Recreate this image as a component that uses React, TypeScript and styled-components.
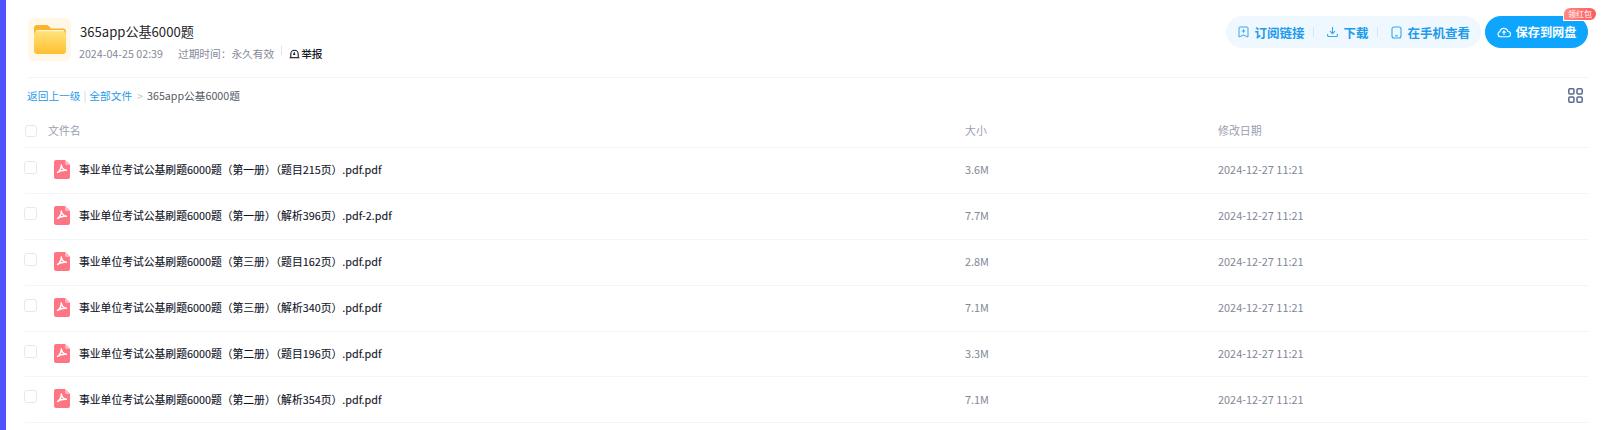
import React from 'react';
import styled, { createGlobalStyle } from 'styled-components';

const GlobalStyle = createGlobalStyle`
  html, body {
    margin: 0;
    padding: 0;
    background: #fff;
    font-family: "Noto Sans CJK SC", "Noto Sans", sans-serif;
  }
`;

const Page = styled.div`
  display: flex;
  height: 430px;
  overflow: hidden;
`;

const SideBar = styled.div`
  width: 6px;
  flex: none;
  background: #4f52ff;
`;

const Main = styled.div`
  flex: 1;
  min-width: 0;
  padding: 0 12px 0 19px;
`;

const Header = styled.div`
  display: flex;
  align-items: flex-start;
  justify-content: space-between;
  height: 77px;
  margin-left: 3px;
  border-bottom: 1px solid #f2f3f5;
`;

const Info = styled.div`
  display: flex;
  align-items: flex-start;
  gap: 8px;
  padding-top: 18px;
`;

const FolderTile = styled.div`
  width: 43px;
  height: 43px;
  border-radius: 6px;
  background: #fff8e8;
  display: flex;
  align-items: center;
  justify-content: center;
`;

const TitleBlock = styled.div`
  display: flex;
  flex-direction: column;
  gap: 3px;
  margin-top: 4px;
`;

const Title = styled.div`
  font-size: 13.1px;
  line-height: 20px;
  color: #1f2329;
  margin-left: 1px;
`;

const Meta = styled.div`
  display: flex;
  align-items: center;
  font-size: 10.7px;
  line-height: 18px;
  color: #858a98;
`;

const MetaTime = styled.span`
  margin-right: 15px;
`;

const ReportLink = styled.span`
  display: flex;
  align-items: center;
  gap: 1px;
  color: #14171f;
  font-weight: 500;
  margin-left: 7px;
  padding-left: 8px;
  position: relative;
  &::before {
    content: '';
    position: absolute;
    left: 0;
    top: 1px;
    width: 1px;
    height: 9px;
    background: #dfe2e7;
  }
`;

const Actions = styled.div`
  display: flex;
  align-items: center;
  gap: 4px;
  margin-right: 1px;
  padding-top: 16px;
`;

const ActionPill = styled.div`
  display: flex;
  align-items: center;
  height: 32px;
  padding: 0 11px 0 12px;
  border-radius: 16px;
  background: #eff8ff;
`;

const ActionItem = styled.div`
  display: flex;
  align-items: center;
  gap: 5px;
  font-size: 12.5px;
  font-weight: 700;
  color: #1e9bea;
`;

const ActionDivider = styled.div`
  width: 1px;
  height: 10px;
  background: #d5e6f2;
  margin: 0 13px 0 9px;
`;

const SaveButton = styled.div`
  position: relative;
  display: flex;
  align-items: center;
  justify-content: center;
  gap: 5px;
  width: 103px;
  height: 32px;
  border-radius: 16px;
  background: #0ea5ff;
  color: #fff;
  font-size: 12.2px;
  font-weight: 700;
`;

const RedBadge = styled.div`
  position: absolute;
  top: -8px;
  right: -8px;
  width: 32px;
  height: 12px;
  border-radius: 6px 6px 6px 0;
  background: linear-gradient(90deg, #ff8a80, #ff5a5f);
  color: #fff;
  font-size: 8px;
  font-weight: 400;
  line-height: 12px;
  text-align: center;
  box-shadow: 0 0 0 1px #fff;
`;

const CrumbBar = styled.div`
  display: flex;
  align-items: center;
  justify-content: space-between;
  height: 34px;
  margin-left: 2px;
  padding-right: 6px;
  font-size: 10.7px;
`;

const Crumbs = styled.div`
  display: flex;
  align-items: center;
  color: #555a66;
`;

const CrumbLink = styled.span`
  color: #1f9ae8;
`;

const CrumbSep = styled.span<{ $color: string; $wide?: boolean }>`
  color: ${({ $color }) => $color};
  margin: ${({ $wide }) => ($wide ? '0 4px 0 5px' : '0 3px')};
`;

const TableRow = styled.div`
  display: grid;
  grid-template-columns: 29px 26px 885px 253px 1fr;
  align-items: center;
  height: 45.9px;
  padding-bottom: 2px;
  box-sizing: border-box;
  border-bottom: 1px solid #f4f5f7;
  font-size: 10.9px;
  color: #838897;
`;

const HeadRow = styled(TableRow)`
  grid-template-columns: 23px 917px 253px 1fr;
  height: 36px;
  padding-bottom: 0;
  color: #9aa0ae;
`;

const Check = styled.div<{ $head?: boolean }>`
  width: ${({ $head }) => ($head ? '12px' : '13px')};
  height: ${({ $head }) => ($head ? '12px' : '13px')};
  margin-left: ${({ $head }) => ($head ? '0' : '-1px')};
  border: 1px solid #e6e8ec;
  border-radius: 3px;
  box-sizing: border-box;
  transform: translateY(${({ $head }) => ($head ? '1px' : '-2px')});
`;

const FileIcon = styled.svg`
  display: block;
  width: 16px;
  height: 19px;
`;

const FileName = styled.div`
  font-size: 10.8px;
  color: #0f1226;
  margin-left: -1px;
  -webkit-text-stroke: 0.1px #0f1226;
`;

const FolderIcon = () => (
  <svg width="32" height="29" viewBox="0 0 32 29">
    <defs>
      <linearGradient id="folderFront" x1="0" y1="0" x2="0" y2="1">
        <stop offset="0" stopColor="#ffe27d" />
        <stop offset="1" stopColor="#ffbf2e" />
      </linearGradient>
    </defs>
    <path d="M3 0h9c1.500 0 2.500.6 3.400 1.600L17 3.400h12c1.700 0 3 1.300 3 3V12H0V3c0-1.700 1.300-3 3-3z" fill="#fbb52c" />
    <rect x="1.500" y="5" width="29" height="5" rx="2" fill="#fff4d2" />
    <rect x="0" y="6.300" width="32" height="22.700" rx="3.500" fill="url(#folderFront)" />
  </svg>
);

const BellIcon = () => (
  <svg width="11" height="11" viewBox="0 0 11 11" fill="none" stroke="#14171f" strokeWidth="1.100">
    <path d="M1.800 8.600V5a3.700 3.700 0 0 1 7.400 0v3.600" />
    <path d="M.6 8.700h9.800" />
    <path d="M5.600 3.200 4.700 5.400h1.500" />
  </svg>
);

const BookmarkIcon = () => (
  <svg width="11" height="12" viewBox="0 0 11 12" fill="none" stroke="#36a6ee" strokeWidth="1">
    <path d="M1 2c0-.6.4-1 1-1h7c.6 0 1 .4 1 1v9L5.500 9 1 11z" strokeLinejoin="round" />
    <path d="M3.800 5h3.400M5.500 3.300v3.400" />
  </svg>
);

const DownloadIcon = () => (
  <svg width="11" height="12" viewBox="0 0 11 12" fill="none" stroke="#36a6ee" strokeWidth="1.100">
    <path d="M5.500 1v6.500M3 5.200l2.500 2.500L8 5.200" />
    <path d="M.6 8v1.500c0 .6.4 1 1 1h7.800c.6 0 1-.4 1-1V8" />
  </svg>
);

const PhoneIcon = () => (
  <svg width="11" height="13" viewBox="0 0 11 13" fill="none" stroke="#36a6ee" strokeWidth="1.100">
    <rect x="1" y="1" width="9" height="11" rx="2" />
    <path d="M4 9.800h3" />
  </svg>
);

const CloudIcon = () => (
  <svg width="14" height="12" viewBox="0 0 14 12" fill="none" stroke="#fff" strokeWidth="1.100">
    <path d="M4 10.700H3.400a2.600 2.600 0 0 1-.5-5.100 4.100 4.100 0 0 1 8-.1 2.600 2.600 0 0 1 .1 5.200z" strokeLinejoin="round" />
    <path d="M7 9V5.200M5.400 6.700 7 5.100l1.600 1.600" />
  </svg>
);

const GridIcon = () => (
  <svg width="15" height="15" viewBox="0 0 15 15" fill="none" stroke="#5b6b8c" strokeWidth="1.500">
    <rect x=".8" y=".8" width="5.200" height="5.200" rx="1.200" />
    <rect x="9" y=".8" width="5.200" height="5.200" rx="1.200" />
    <rect x=".8" y="9" width="5.200" height="5.200" rx="1.200" />
    <rect x="9" y="9" width="5.200" height="5.200" rx="1.200" />
  </svg>
);

const PdfIcon = () => (
  <FileIcon viewBox="0 0 16 19">
    <path d="M2 0h9l5 5v12c0 1.100-.9 2-2 2H2c-1.100 0-2-.9-2-2V2C0 .9.900 0 2 0z" fill="#ff7583" />
    <path d="M11 0l5 5h-3.500c-.8 0-1.500-.7-1.500-1.500z" fill="#ffb3bb" />
    <path
      d="M7.300 5c.2 2.400-1.200 5.400-3.500 7.300M7.300 5c.3 2.500 2 4.600 5 5.300M3.600 12.400c2-1.400 5.200-2.300 8.700-2.100"
      fill="none"
      stroke="#fff"
      strokeWidth="1.500"
      strokeLinecap="round"
    />
  </FileIcon>
);

const files = [
  { name: '事业单位考试公基刷题6000题（第一册）（题目215页）.pdf.pdf', size: '3.6M' },
  { name: '事业单位考试公基刷题6000题（第一册）（解析396页）.pdf-2.pdf', size: '7.7M' },
  { name: '事业单位考试公基刷题6000题（第三册）（题目162页）.pdf.pdf', size: '2.8M' },
  { name: '事业单位考试公基刷题6000题（第三册）（解析340页）.pdf.pdf', size: '7.1M' },
  { name: '事业单位考试公基刷题6000题（第二册）（题目196页）.pdf.pdf', size: '3.3M' },
  { name: '事业单位考试公基刷题6000题（第二册）（解析354页）.pdf.pdf', size: '7.1M' },
];

const App = () => (
  <Page>
    <GlobalStyle />
    <SideBar />
    <Main>
      <Header>
        <Info>
          <FolderTile>
            <FolderIcon />
          </FolderTile>
          <TitleBlock>
            <Title>365app公基6000题</Title>
            <Meta>
              <MetaTime>2024-04-25 02:39</MetaTime>
              <span>过期时间：永久有效</span>
              <ReportLink>
                <BellIcon />
                举报
              </ReportLink>
            </Meta>
          </TitleBlock>
        </Info>
        <Actions>
          <ActionPill>
            <ActionItem>
              <BookmarkIcon />
              订阅链接
            </ActionItem>
            <ActionDivider />
            <ActionItem>
              <DownloadIcon />
              下载
            </ActionItem>
            <ActionDivider />
            <ActionItem>
              <PhoneIcon />
              在手机查看
            </ActionItem>
          </ActionPill>
          <SaveButton>
            <CloudIcon />
            保存到网盘
            <RedBadge>领红包</RedBadge>
          </SaveButton>
        </Actions>
      </Header>
      <CrumbBar>
        <Crumbs>
          <CrumbLink>返回上一级</CrumbLink>
          <CrumbSep $color="#c6d9e8">|</CrumbSep>
          <CrumbLink>全部文件</CrumbLink>
          <CrumbSep $color="#c0c4cc" $wide>&gt;</CrumbSep>
          365app公基6000题
        </Crumbs>
        <GridIcon />
      </CrumbBar>
      <HeadRow>
        <Check $head />
        <div>文件名</div>
        <div>大小</div>
        <div>修改日期</div>
      </HeadRow>
      {files.map(file => (
        <TableRow key={file.name}>
          <Check />
          <PdfIcon />
          <FileName>{file.name}</FileName>
          <div>{file.size}</div>
          <div>2024-12-27 11:21</div>
        </TableRow>
      ))}
    </Main>
  </Page>
);

export default App;
